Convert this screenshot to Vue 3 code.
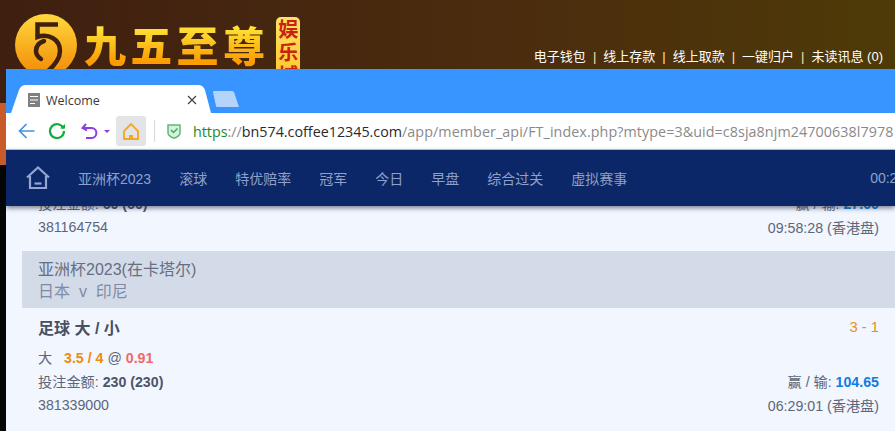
<script setup>
const links = ['电子钱包', '线上存款', '线上取款', '一键归户', '未读讯息 (0)']
const navItems = ['亚洲杯2023', '滚球', '特优赔率', '冠军', '今日', '早盘', '综合过关', '虚拟赛事']
</script>

<template>
  <div class="page">
    <header class="site-head">
      <svg class="logo" width="62" height="62" viewBox="0 0 62 62">
        <defs>
          <linearGradient id="coin" x1="0" y1="0" x2="0" y2="1">
            <stop offset="0" stop-color="#ffd83c" />
            <stop offset="1" stop-color="#f28a05" />
          </linearGradient>
        </defs>
        <circle cx="31" cy="31" r="31" fill="url(#coin)" />
        <path d="M43 10.500H22.500V23C33 19 45 25 45 37 45 45 39 52 32 58" fill="none" stroke="#3f1f10" stroke-width="4.500" />
        <path d="M29 27C23 29 21 33 21 37 21 41 23 43 26 45" fill="none" stroke="#3f1f10" stroke-width="4.500" stroke-linecap="round" />
      </svg>
      <div class="brand">九五至尊</div>
      <div class="badge">
        <span>娱</span>
        <span>乐</span>
        <span>城</span>
      </div>
      <nav class="top-links">
        <template v-for="(link, i) in links" :key="link">
          <span v-if="i" class="pipe">|</span>
          <span>{{ link }}</span>
        </template>
      </nav>
    </header>
    <div class="strip"></div>

    <main class="browser">
      <div class="tabs">
        <div class="tab">
          <svg class="tab-bg" width="200" height="28" viewBox="0 0 200 28">
            <path d="M0 28 8 5Q10 0 15 0H187Q192 0 194 5L200 28Z" fill="#fff" />
          </svg>
          <svg class="doc" width="12" height="14" viewBox="0 0 12 14">
            <rect width="12" height="14" fill="#808080" />
            <path d="M2 3.500H10M2 7H10M2 10.500H7" stroke="#fff" stroke-width="1" />
          </svg>
          <span class="tab-title">Welcome</span>
          <svg class="tab-close" width="10" height="10" viewBox="0 0 10 10">
            <path d="M1 1 9 9M9 1 1 9" stroke="#444" stroke-width="1.200" />
          </svg>
        </div>
        <svg class="new-tab" width="28" height="18" viewBox="0 0 28 18">
          <path d="M1 2Q1 1 2 1H20Q21 1 22 2L27 17H5Q4 17 4 16Z" fill="#b5d4fb" />
        </svg>
      </div>

      <div class="toolbar">
        <svg width="17" height="16" viewBox="0 0 17 16">
          <path d="M8.500 1 1.500 8l7 7M1.500 8H16.500" fill="none" stroke="#4a90e2" stroke-width="1.700" />
        </svg>
        <svg class="reload" width="18" height="18" viewBox="0 0 18 18">
          <path d="M15.500 6.500A7 7 0 1 0 16 9" fill="none" stroke="#12ad3f" stroke-width="2.200" />
          <path d="M12 6.500H17V2Z" fill="#12ad3f" />
        </svg>
        <svg class="undo" width="17" height="16" viewBox="0 0 17 16">
          <path d="M5 1 1.500 5 6 7.500M2 5H10.500C17 5 17 15 10.500 15H5" fill="none" stroke="#8a3fe0" stroke-width="2" />
        </svg>
        <span class="caret"></span>
        <div class="home-btn">
          <svg width="16" height="17" viewBox="0 0 16 17">
            <path d="M8 1 1 8v8h14V8Z" fill="none" stroke="#f5a623" stroke-width="1.800" />
            <path d="M6 16v-4h4v4" fill="#f5a623" />
          </svg>
        </div>
        <span class="sep"></span>
        <svg class="shield" width="14" height="16" viewBox="0 0 14 16">
          <path d="M1 2H13V10Q13 13 7 15.200 1 13 1 10Z" fill="#d6f2dc" stroke="#60b878" stroke-width="1.500" />
          <path d="M4 7 6.500 9.500 10.500 5.500" fill="none" stroke="#42a85f" stroke-width="1.500" />
        </svg>
        <div class="url"><span class="scheme">https</span><span class="dim">://</span><span class="host">bn574.coffee12345.com</span><span class="dim path">/app/member_api/FT_index.php?mtype=3&amp;uid=c8sja8njm24700638l7978</span></div>
      </div>

      <nav class="nav">
        <svg class="nav-home" width="24" height="24" viewBox="0 0 24 24">
          <path d="M1 11.500 12 1.500 23 11.500M4 10V22H20V10" fill="none" stroke="#94a6cf" stroke-width="2.200" />
          <path d="M8.500 17.500H15.500" stroke="#94a6cf" stroke-width="2.200" />
        </svg>
        <span v-for="item in navItems" :key="item" class="nav-item">{{ item }}</span>
        <span class="nav-time">00:25:41</span>
      </nav>

      <section class="content">
        <div class="row">
          <span>投注金额: <b>60 (60)</b></span>
          <span>赢 / 输: <b class="win">27.00</b></span>
        </div>
        <div class="row">
          <span>381164754</span>
          <span>09:58:28 (香港盘)</span>
        </div>

        <div class="group">
          <div>亚洲杯2023(在卡塔尔)</div>
          <div class="teams">日本 &nbsp;v&nbsp; 印尼</div>
        </div>

        <div class="row title-row">
          <b class="title">足球 大 / 小</b>
          <span class="score">3 - 1</span>
        </div>
        <div class="row pick-row">
          <span>大 &nbsp; <b class="line">3.5 / 4</b> @ <b class="odds">0.91</b></span>
        </div>
        <div class="row">
          <span>投注金额: <b>230 (230)</b></span>
          <span>赢 / 输: <b class="win">104.65</b></span>
        </div>
        <div class="row">
          <span>381339000</span>
          <span>06:29:01 (香港盘)</span>
        </div>
      </section>
    </main>
  </div>
</template>

<style>
html, body {
  margin: 0;
  background: #000;
}
</style>

<style scoped>
.page {
  position: relative;
  width: 895px;
  height: 431px;
  overflow: hidden;
  background: #050505;
  font-family: "Liberation Sans", "Noto Sans CJK SC", sans-serif;
}

.site-head {
  height: 103px;
  display: flex;
  align-items: flex-start;
  background: linear-gradient(90deg, #3f1f10, #4b2c0e 55%, #4e3a08);
  box-sizing: border-box;
  padding-left: 15px;
}

.logo {
  margin-top: 14px;
  flex: none;
}

.brand {
  margin: 18px 0 0 7px;
  font-family: "Noto Sans CJK SC", sans-serif;
  font-size: 42px;
  font-weight: 900;
  line-height: 52px;
  letter-spacing: 4.300px;
  background: linear-gradient(180deg, #ffe53a 15%, #fb9c00 85%);
  -webkit-background-clip: text;
  background-clip: text;
  color: transparent;
}

.badge {
  margin: 17px 0 0 7px;
  width: 24px;
  height: 70px;
  border-radius: 5px;
  background: linear-gradient(180deg, #ffe26a, #ffc21e);
  color: #c8230f;
  font-family: "Noto Sans CJK SC", sans-serif;
  font-size: 20px;
  line-height: 23px;
  text-align: center;
  font-weight: 700;
  display: flex;
  flex-direction: column;
}

.top-links {
  margin: 48px 12px 0 auto;
  display: flex;
  gap: 7px;
  color: #fff;
  font-size: 13px;
  line-height: 18px;
}

.pipe {
  color: #ffe7a6;
}

.strip {
  height: 62px;
  background: #c95a2a;
}

.browser {
  position: absolute;
  left: 6px;
  top: 69px;
  right: 0;
  bottom: 0;
  display: flex;
  flex-direction: column;
  overflow: hidden;
  background: #f2f6ff;
}

.tabs {
  height: 44px;
  flex: none;
  display: flex;
  align-items: flex-end;
  background: #3894ff;
}

.tab {
  position: relative;
  width: 200px;
  height: 28px;
  margin-left: 5px;
  display: flex;
  align-items: center;
  flex: none;
}

.tab-bg {
  position: absolute;
  left: 0;
  top: 0;
}

.doc,
.tab-title,
.tab-close {
  position: relative;
}

.doc {
  margin-left: 17px;
  margin-top: 1px;
}

.tab-title {
  margin: 2px 0 0 6px;
  font-family: "Open Sans", sans-serif;
  font-size: 12.500px;
  color: #3a3a3a;
}

.tab-close {
  margin-left: auto;
  margin-right: 14px;
  margin-top: 2px;
}

.new-tab {
  margin: 0 0 5px 1px;
}

.toolbar {
  height: 36px;
  flex: none;
  display: flex;
  align-items: center;
  background: #fff;
  border-bottom: 1px solid #bccbe3;
  padding-left: 12px;
}

.reload {
  margin-left: 13px;
}

.undo {
  margin-left: 15px;
}

.caret {
  width: 0;
  height: 0;
  margin: 1px 0 0 6px;
  border-left: 3px solid transparent;
  border-right: 3px solid transparent;
  border-top: 3px solid #8a3fe0;
}

.home-btn {
  width: 30px;
  height: 30px;
  margin-left: 6px;
  flex: none;
  display: flex;
  align-items: center;
  justify-content: center;
  background: #e3e4e6;
  border-radius: 3px;
}

.sep {
  width: 1px;
  height: 22px;
  margin-left: 8px;
  background: #d8d8d8;
}

.shield {
  margin-left: 12px;
  flex: none;
}

.url {
  margin-left: 12px;
  font-family: "Open Sans", sans-serif;
  font-size: 14.300px;
  white-space: nowrap;
}

.scheme {
  color: #1c8a2e;
}

.dim {
  color: #8a8a8a;
}

.path {
  letter-spacing: 0.080px;
}

.host {
  color: #2a2a2a;
}

.nav {
  position: relative;
  z-index: 1;
  height: 56px;
  flex: none;
  display: flex;
  align-items: center;
  gap: 28px;
  padding-left: 20px;
  margin-bottom: -15px;
  background: #0b2768;
  box-shadow: 0 2px 5px rgba(30, 40, 60, 0.6);
  color: #8fa1ca;
  font-size: 14px;
  white-space: nowrap;
}

.nav-home {
  flex: none;
}

.nav-item {
  flex: none;
}

.nav-time {
  flex: none;
  margin-left: 215px;
}

.content {
  flex: 1;
  color: #5d6678;
  font-size: 14.200px;
}

.row {
  height: 24px;
  display: flex;
  align-items: center;
  justify-content: space-between;
  padding: 0 16px 0 32px;
}

.row b {
  color: #4c5566;
}

.row b.win {
  color: #0f7ce0;
}

.row b.line {
  color: #ef8b10;
}

.row b.odds {
  color: #ee6a6a;
}

.group {
  margin: 12px 0 0 16px;
  height: 57px;
  box-sizing: border-box;
  padding: 8px 16px 0;
  background: #d3dbe9;
  font-size: 16px;
  line-height: 22px;
  color: #666f80;
}

.teams {
  color: #7f8ba5;
}

.title-row {
  height: 38px;
}

.row b.title {
  font-size: 16px;
  color: #47505f;
}

.score {
  color: #e89020;
  font-size: 14.800px;
}

.pick-row {
  height: 18px;
  margin: 2px 0 3px;
}
</style>
